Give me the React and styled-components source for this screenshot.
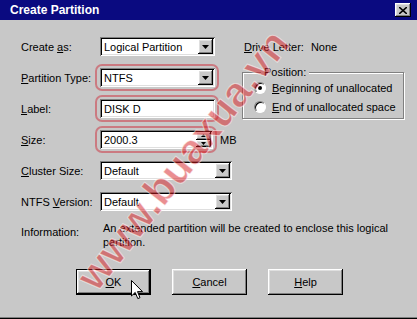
import styled, { createGlobalStyle, css } from "styled-components";

const GlobalStyle = createGlobalStyle`
  html, body {
    margin: 0;
    padding: 0;
    background: #c8c8c8;
  }
  body {
    font-family: "Liberation Sans", Arial, sans-serif;
    font-size: 11px;
    color: #000;
  }
`;

const raised = css`
  box-shadow: inset -1px -1px 0 #000, inset 1px 1px 0 #fff,
    inset -2px -2px 0 #808080, inset 2px 2px 0 #dfdfdf;
`;

const sunken = css`
  box-shadow: inset 1px 1px 0 #808080, inset -1px -1px 0 #fff,
    inset 2px 2px 0 #000, inset -2px -2px 0 #dfdfdf;
`;

const Window = styled.div`
  position: relative;
  width: 417px;
  height: 319px;
  box-sizing: border-box;
  background: #c8c8c8;
  border-bottom: 1px solid #000;
  box-shadow: inset 0 -1px 0 #808080;
  overflow: hidden;
  display: flex;
  flex-direction: column;
`;

const TitleBar = styled.div`
  height: 20px;
  flex: none;
  display: flex;
  align-items: center;
  padding: 0 6px 0 10px;
  background: #0a0a80;
  color: #fff;
  font-weight: 700;
  font-size: 12px;
`;

const CloseButton = styled.div`
  margin-left: auto;
  width: 16px;
  height: 14px;
  box-sizing: border-box;
  background: #c8c8c8;
  ${raised};
  display: flex;
  align-items: center;
  justify-content: center;
`;

const Body = styled.div`
  display: flex;
  flex-direction: column;
  padding: 17px 0 0 21px;
`;

const Top = styled.div`
  display: flex;
  align-items: flex-start;
`;

const FormGrid = styled.div`
  flex: none;
  width: 211px;
  display: grid;
  grid-template-columns: 79px 132px;
  grid-auto-rows: 19px;
  row-gap: 12px;
  align-items: center;
`;

const Label = styled.span`
  white-space: nowrap;
`;

const Control = styled.div`
  display: flex;
  align-items: center;
  gap: 7px;
  min-width: 0;
`;

const Highlight = styled.div`
  position: relative;
  display: flex;
  flex: none;

  ${(p) =>
    p.$on &&
    css`
      &::after {
        content: "";
        position: absolute;
        inset: -4px -4px -4px -5px;
        border: 2px solid rgba(205, 80, 90, 0.65);
        border-radius: 7px;
        pointer-events: none;
      }
    `}
`;

const Field = styled.div`
  flex: none;
  width: ${(p) => p.$w}px;
  min-width: ${(p) => p.$w}px;
  height: 19px;
  box-sizing: border-box;
  background: #fff;
  ${sunken};
  display: flex;
  align-items: center;
  padding: 0 2px 0 4px;
`;

const FieldText = styled.span`
  flex: 1;
  white-space: nowrap;
  overflow: hidden;
`;

const DropButton = styled.div`
  width: 15px;
  height: 15px;
  flex: none;
  box-sizing: border-box;
  background: #c8c8c8;
  ${raised};
  display: flex;
  align-items: center;
  justify-content: center;
`;

const Spinner = styled.div`
  width: 15px;
  height: 15px;
  flex: none;
  display: flex;
  flex-direction: column;
`;

const SpinHalf = styled.div`
  flex: 1;
  box-sizing: border-box;
  background: #c8c8c8;
  ${raised};
  display: flex;
  align-items: center;
  justify-content: center;
`;

const SidePanel = styled.div`
  margin-left: 10px;
  width: 162px;
  flex: none;
  display: flex;
  flex-direction: column;
`;

const DriveRow = styled.div`
  height: 19px;
  display: flex;
  align-items: center;
  padding-left: 2px;
  gap: 7px;
`;

const GroupBox = styled.div`
  position: relative;
  margin-top: 16px;
  border: 1px solid #808080;
  box-shadow: inset 1px 1px 0 #fff, 1px 1px 0 #fff;
  padding: 5px 0 2px 11px;
`;

const Legend = styled.span`
  position: absolute;
  top: -8px;
  left: 18px;
  padding: 0 3px;
  background: #c8c8c8;
  line-height: 14px;
`;

const RadioRow = styled.div`
  height: 19px;
  display: flex;
  align-items: center;
  gap: 6px;
  white-space: nowrap;
`;

const RadioDot = styled.span`
  width: 12px;
  height: 12px;
  box-sizing: border-box;
  border-radius: 50%;
  background: #fff;
  border: 1px solid;
  border-color: #808080 #fff #fff #808080;
  box-shadow: inset 1px 1px 0 #000;
  display: flex;
  align-items: center;
  justify-content: center;

  &::after {
    content: "";
    width: 4px;
    height: 4px;
    border-radius: 50%;
    background: ${(p) => (p.$checked ? "#000" : "transparent")};
  }
`;

const InfoRow = styled.div`
  display: flex;
  margin-top: 10px;
`;

const InfoLabel = styled.span`
  width: 79px;
  padding-top: 5px;
  flex: none;
`;

const InfoText = styled.p`
  margin: 0;
  width: 292px;
  padding-left: 3px;
  line-height: 14px;
`;

const ButtonRow = styled.div`
  display: flex;
  gap: 21px;
  margin: 20px 0 0 55px;
`;

const Button = styled.button`
  width: 75px;
  height: 26px;
  box-sizing: border-box;
  padding: 0;
  border: ${(p) => (p.$default ? "1px solid #000" : "none")};
  background: #c8c8c8;
  ${raised};
  font-family: inherit;
  font-size: 11px;
  color: #000;
`;

const Watermark = styled.span`
  position: absolute;
  left: 183px;
  top: 160px;
  transform: translate(-50%, -50%) rotate(-52deg);
  font-family: "Liberation Sans", Arial, sans-serif;
  font-weight: 700;
  font-size: 42px;
  white-space: nowrap;
  color: rgba(214, 30, 35, 0.5);
  -webkit-text-stroke: 1px rgba(255, 255, 255, 0.55);
  pointer-events: none;
`;

const Pointer = styled.svg`
  position: absolute;
  left: 131px;
  top: 280px;
`;

const Arrow = () => (
  <svg width="7" height="4" viewBox="0 0 7 4">
    <polygon points="0,0 7,0 3.5,4" fill="#000" />
  </svg>
);

const SmallArrow = ({ up }) => (
  <svg width="5" height="3" viewBox="0 0 5 3">
    <polygon points={up ? "2.5,0 5,3 0,3" : "0,0 5,0 2.5,3"} fill="#000" />
  </svg>
);

const Combo = ({ width, value }) => (
  <Field $w={width}>
    <FieldText>{value}</FieldText>
    <DropButton>
      <Arrow />
    </DropButton>
  </Field>
);

export default function App() {
  return (
    <>
      <GlobalStyle />
      <Window>
        <TitleBar>
          Create Partition
          <CloseButton>
            <svg width="8" height="7" viewBox="0 0 8 7">
              <path d="M0 0 L8 7 M8 0 L0 7" stroke="#000" strokeWidth="1.6" />
            </svg>
          </CloseButton>
        </TitleBar>
        <Body>
          <Top>
            <FormGrid>
              <Label>
                Create <u>a</u>s:
              </Label>
              <Control>
                <Combo width={115} value="Logical Partition" />
              </Control>

              <Label>
                <u>P</u>artition Type:
              </Label>
              <Control>
                <Highlight $on>
                  <Combo width={115} value="NTFS" />
                </Highlight>
              </Control>

              <Label>
                <u>L</u>abel:
              </Label>
              <Control>
                <Highlight $on>
                  <Field $w={115}>
                    <FieldText>DISK D</FieldText>
                  </Field>
                </Highlight>
              </Control>

              <Label>
                <u>S</u>ize:
              </Label>
              <Control>
                <Highlight $on>
                  <Field $w={113}>
                    <FieldText>2000.3</FieldText>
                    <Spinner>
                      <SpinHalf>
                        <SmallArrow up />
                      </SpinHalf>
                      <SpinHalf>
                        <SmallArrow />
                      </SpinHalf>
                    </Spinner>
                  </Field>
                </Highlight>
                <Label>MB</Label>
              </Control>

              <Label>
                <u>C</u>luster Size:
              </Label>
              <Control>
                <Combo width={132} value="Default" />
              </Control>

              <Label>
                NTFS <u>V</u>ersion:
              </Label>
              <Control>
                <Combo width={132} value="Default" />
              </Control>
            </FormGrid>

            <SidePanel>
              <DriveRow>
                <Label>
                  <u>D</u>rive Letter:
                </Label>
                <Label>None</Label>
              </DriveRow>
              <GroupBox>
                <Legend>Position:</Legend>
                <RadioRow>
                  <RadioDot $checked />
                  <span>
                    <u>B</u>eginning of unallocated
                  </span>
                </RadioRow>
                <RadioRow>
                  <RadioDot />
                  <span>
                    <u>E</u>nd of unallocated space
                  </span>
                </RadioRow>
              </GroupBox>
            </SidePanel>
          </Top>

          <InfoRow>
            <InfoLabel>Information:</InfoLabel>
            <InfoText>
              An extended partition will be created to enclose this logical
              partition.
            </InfoText>
          </InfoRow>

          <ButtonRow>
            <Button $default>
              <u>O</u>K
            </Button>
            <Button>
              <u>C</u>ancel
            </Button>
            <Button>
              <u>H</u>elp
            </Button>
          </ButtonRow>
        </Body>

        <Watermark>www.buaxua.vn</Watermark>

        <Pointer width="13" height="20" viewBox="0 0 13 20">
          <path
            d="M0.5 0.5 L0.5 16 L4.2 12.4 L6.8 18.6 L9 17.7 L6.5 11.6 L11.5 11.6 Z"
            fill="#fff"
            stroke="#000"
            strokeWidth="1"
          />
        </Pointer>
      </Window>
    </>
  );
}
